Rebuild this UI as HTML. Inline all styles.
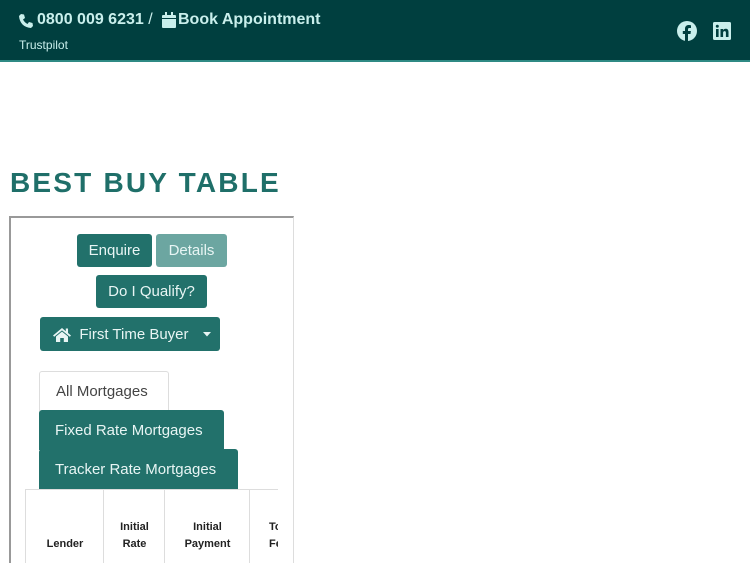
<!DOCTYPE html>
<html><head><style>
*{margin:0;padding:0;box-sizing:border-box}
html,body{width:750px;height:563px;overflow:hidden}
body{background:#fff;font-family:"Liberation Sans",sans-serif;position:relative}
.hdr{position:absolute;left:0;top:0;width:750px;height:62px;background:#003f3f;border-bottom:2px solid #2f8a84}
.t{position:absolute;color:#c9efec}
.btn{position:absolute;background:#22716b;color:#e8f5f4;font-size:15px;border-radius:3px;display:flex;align-items:center;justify-content:center}
.th{position:absolute;top:490px;height:73px;border-left:1px solid #ddd;font-size:11px;font-weight:bold;color:#222;text-align:center;line-height:17px}
</style></head><body>
<div class="hdr">
 <svg class="t" style="left:18px;top:13px" width="16" height="16" viewBox="0 0 16 16"><path fill="#c9efec" d="M3 1l3 .5 1 3.5-2 1.5c1 2 2.5 3.5 4.5 4.5L11 9l3.5 1 .5 3-2 2C6 14.5 1.5 10 1 3z"/></svg>
 <div class="t" style="left:37px;top:11px;font-size:16px;font-weight:bold">0800 009 6231 <span style="font-weight:normal">/</span></div>
 <svg class="t" style="left:162px;top:12px" width="14" height="16" viewBox="0 0 14 16"><rect x="0" y="3" width="14" height="13" rx="1" fill="#c9efec"/><rect x="3" y="0" width="2" height="4" fill="#c9efec"/><rect x="9" y="0" width="2" height="4" fill="#c9efec"/><rect x="0" y="6" width="14" height="1" fill="#003f3f"/></svg>
 <div class="t" style="left:178px;top:11px;font-size:16px;font-weight:bold">Book Appointment</div>
 <div class="t" style="left:19px;top:38px;font-size:12px">Trustpilot</div>
 <svg style="position:absolute;left:677px;top:21px" width="20" height="20" viewBox="0 0 20 20"><circle cx="10" cy="10" r="10" fill="#c9efec"/><path fill="#003f3f" d="M11 20v-7h2.5l.4-3H11V8.3c0-.8.3-1.3 1.4-1.3H14V4.3C13.5 4.2 12.7 4 11.8 4 9.6 4 8 5.3 8 7.8V10H5.8v3H8v7z"/></svg>
 <svg style="position:absolute;left:713px;top:22px" width="18" height="18" viewBox="0 0 18 18"><rect width="18" height="18" rx="1.5" fill="#c9efec"/><rect x="3" y="7" width="2.6" height="8" fill="#003f3f"/><circle cx="4.3" cy="4.3" r="1.5" fill="#003f3f"/><path fill="#003f3f" d="M7.5 7h2.5v1.2c.5-.9 1.5-1.4 2.7-1.4 2 0 2.8 1.2 2.8 3.4V15h-2.6v-4.2c0-1-.3-1.7-1.3-1.7s-1.5.7-1.5 1.7V15H7.5z"/></svg>
</div>
<div style="position:absolute;left:10px;top:167px;font-size:28px;font-weight:bold;color:#1f6f69;letter-spacing:2.2px">BEST BUY TABLE</div>
<div style="position:absolute;left:9px;top:216px;width:285px;height:347px;border:2px solid #999;border-right:1px solid #ddd;border-bottom:none"></div>
<div class="btn" style="left:77px;top:234px;width:75px;height:33px">Enquire</div>
<div class="btn" style="left:156px;top:234px;width:71px;height:33px;background:#6ca6a1">Details</div>
<div class="btn" style="left:96px;top:275px;width:111px;height:33px">Do I Qualify?</div>
<div class="btn" style="left:40px;top:317px;width:180px;height:34px;justify-content:flex-start;padding-left:13px"><svg width="18" height="15" viewBox="0 0 18 15"><path fill="#e8f5f4" d="M9 1L0 8.5l1.2 1.3L9 3.4l7.8 6.4L18 8.5 15 6V1.5h-2.2v2.7z"/><path fill="#e8f5f4" d="M3 9.5L9 4.6l6 4.9V15h-4.2v-4H7.2v4H3z"/></svg>&nbsp;&nbsp;First Time Buyer<svg style="margin-left:14px" width="8" height="5" viewBox="0 0 8 5"><path d="M0 0h8L4 4.5z" fill="#e8f5f4"/></svg></div>
<div style="position:absolute;left:39px;top:371px;width:130px;height:40px;border:1px solid #ddd;border-bottom:none;border-radius:3px 3px 0 0;color:#444;font-size:15px;padding:11px 0 0 16px">All Mortgages</div>
<div class="btn" style="left:39px;top:410px;width:185px;height:40px;justify-content:flex-start;padding-left:16px;border-radius:3px 3px 0 0">Fixed Rate Mortgages</div>
<div class="btn" style="left:39px;top:449px;width:199px;height:40px;justify-content:flex-start;padding-left:16px;border-radius:3px 3px 0 0">Tracker Rate Mortgages</div>
<div style="position:absolute;left:25px;top:489px;width:253px;border-top:1px solid #ddd"></div>
<div class="th" style="left:25px;width:79px;padding-top:46px">Lender</div>
<div class="th" style="left:103px;width:62px;padding-top:29px">Initial<br>Rate</div>
<div class="th" style="left:164px;width:86px;padding-top:29px">Initial<br>Payment</div>
<div class="th" style="left:249px;width:29px;padding-top:29px;overflow:hidden;text-align:left;padding-left:19px;white-space:nowrap">To<br>Fe</div>
</body></html>
